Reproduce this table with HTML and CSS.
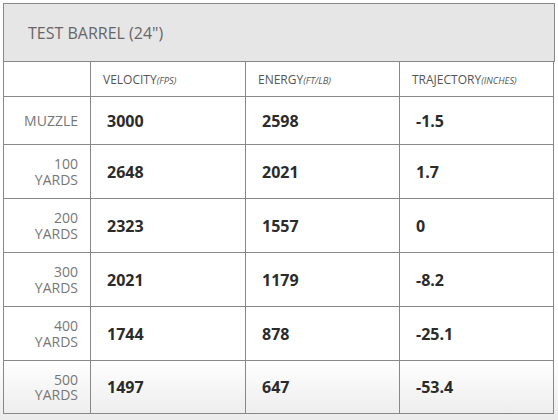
FILE: index.html
```html
<!DOCTYPE html>
<html>
<head>
<meta charset="utf-8">
<link rel="stylesheet" href="styles.css">
</head>
<body>
<div class="panel">
  <div class="panel-title">TEST BARREL (24")</div>
  <table class="ballistics">
    <colgroup>
      <col class="c-label">
      <col class="c-vel">
      <col class="c-en">
      <col class="c-tr">
    </colgroup>
    <thead>
      <tr class="head-row">
        <th></th>
        <th>VELOCITY<em>(FPS)</em></th>
        <th>ENERGY<em>(FT/LB)</em></th>
        <th>TRAJECTORY<em>(INCHES)</em></th>
      </tr>
    </thead>
    <tbody>
      <tr class="row-muzzle">
        <th class="label">MUZZLE</th>
        <td>3000</td><td>2598</td><td>-1.5</td>
      </tr>
      <tr class="row">
        <th class="label"><span class="ln">100</span><span class="ln">YARDS</span></th>
        <td>2648</td><td>2021</td><td>1.7</td>
      </tr>
      <tr class="row">
        <th class="label"><span class="ln">200</span><span class="ln">YARDS</span></th>
        <td>2323</td><td>1557</td><td>0</td>
      </tr>
      <tr class="row">
        <th class="label"><span class="ln">300</span><span class="ln">YARDS</span></th>
        <td>2021</td><td>1179</td><td>-8.2</td>
      </tr>
      <tr class="row">
        <th class="label"><span class="ln">400</span><span class="ln">YARDS</span></th>
        <td>1744</td><td>878</td><td>-25.1</td>
      </tr>
      <tr class="row-last">
        <th class="label"><span class="ln">500</span><span class="ln">YARDS</span></th>
        <td>1497</td><td>647</td><td>-53.4</td>
      </tr>
    </tbody>
  </table>
</div>
</body>
</html>
```

FILE: styles.css
```css
html, body {
  margin: 0;
  padding: 0;
}
body {
  width: 558px;
  height: 420px;
  overflow: hidden;
  font-family: "Open Sans", "Liberation Sans", sans-serif;
  background: linear-gradient(to bottom, #ffffff 0, #ffffff 361px, #ebebeb 420px);
}
.panel {
  padding: 3px 0 0 3px;
}
.panel-title {
  box-sizing: border-box;
  width: 552px;
  height: 59px;
  border: 1px solid #888;
  background: #e6e6e6;
  color: #666;
  font-size: 16px;
  padding-left: 24px;
  display: flex;
  align-items: center;
}
.ballistics {
  border-collapse: separate;
  border-spacing: 0;
  border-left: 1px solid #888;
  table-layout: fixed;
  width: 551px;
}
.c-label { width: 87px; }
.c-vel { width: 155px; }
.c-en { width: 154px; }
.c-tr { width: 154px; }
.ballistics th,
.ballistics td {
  box-sizing: border-box;
  border-right: 1px solid #888;
  border-bottom: 1px solid #888;
  padding: 0;
  vertical-align: middle;
}
.head-row th {
  height: 35px;
  text-align: left;
  font-weight: normal;
  font-size: 12px;
  color: #555;
  padding-left: 12px;
}
.head-row em {
  font-size: 9.3px;
  font-style: italic;
}
.ballistics td {
  padding-left: 16px;
  font-size: 16px;
  font-weight: bold;
  color: #2b2b2b;
}
.ballistics .label {
  text-align: right;
  font-weight: normal;
  font-size: 14px;
  line-height: 16px;
  color: #777;
  padding-right: 12px;
}
.label .ln {
  display: block;
  line-height: 15.5px;
}
.row-muzzle th, .row-muzzle td { height: 48px; }
.row th, .row td { height: 54px; }
.row-last th, .row-last td { height: 53px; }
```
